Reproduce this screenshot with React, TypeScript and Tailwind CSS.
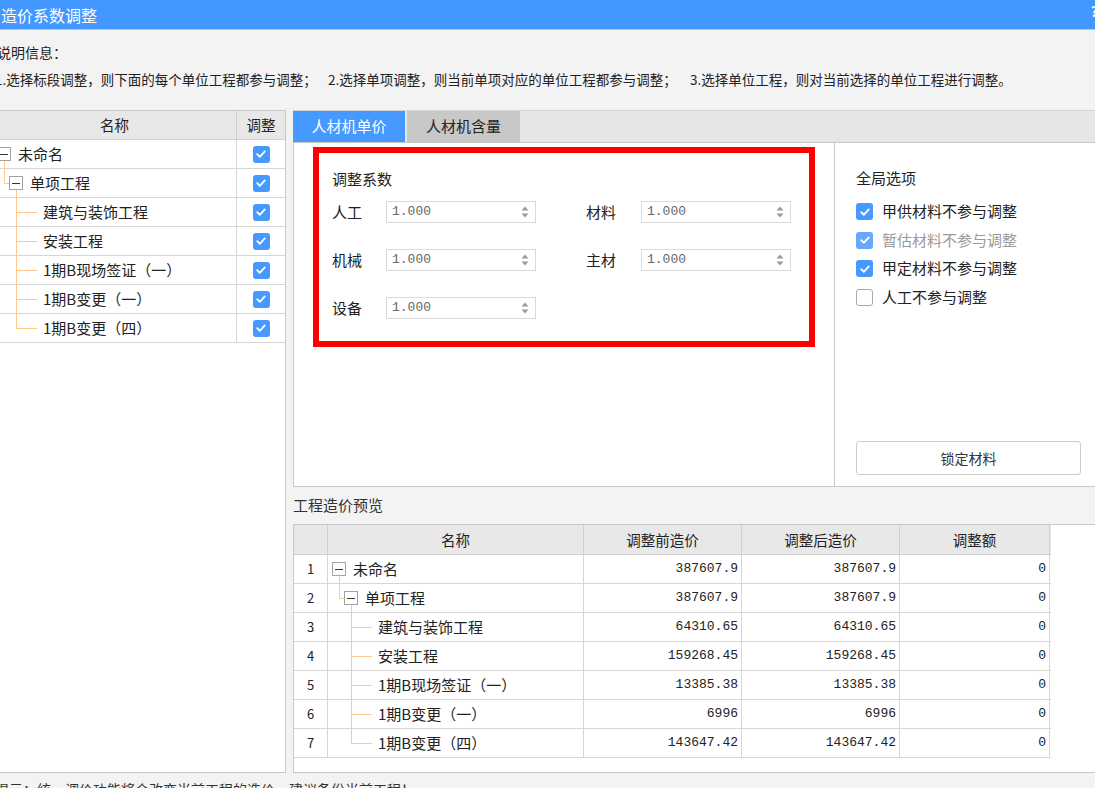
import React from 'react';

const rows = [
  { name: '未命名', before: '387607.9', after: '387607.9' },
  { name: '单项工程', before: '387607.9', after: '387607.9' },
  { name: '建筑与装饰工程', before: '64310.65', after: '64310.65' },
  { name: '安装工程', before: '159268.45', after: '159268.45' },
  { name: '1期B现场签证（一）', before: '13385.38', after: '13385.38' },
  { name: '1期B变更（一）', before: '6996', after: '6996' },
  { name: '1期B变更（四）', before: '143647.42', after: '143647.42' },
];

const line = 'bg-[#ffc98c]';

function MinusBox({ left }: { left: string }) {
  return (
    <span className={`absolute top-[7px] flex h-[14px] w-[14px] items-center justify-center border border-[#a3a3a3] bg-white ${left}`}>
      <span className="h-px w-[8px] bg-[#333]" />
    </span>
  );
}

// tree connectors are drawn inside the name cell
function TreeName({ i, name }: { i: number; name: string }) {
  return (
    <div className="relative h-full">
      {i === 0 && (
        <>
          <span className={`absolute left-[11px] top-[21px] -bottom-px w-px ${line}`} />
          <MinusBox left="left-[4px]" />
          <span className="absolute left-[25px] top-0 flex h-full items-center">{name}</span>
        </>
      )}
      {i === 1 && (
        <>
          <span className={`absolute left-[11px] -top-px h-[15px] w-px ${line}`} />
          <span className={`absolute left-[11px] top-[14px] h-px w-[5px] ${line}`} />
          <span className={`absolute left-[23px] top-[21px] -bottom-px w-px ${line}`} />
          <MinusBox left="left-[16px]" />
          <span className="absolute left-[37px] top-0 flex h-full items-center">{name}</span>
        </>
      )}
      {i > 1 && (
        <>
          <span className={`absolute left-[23px] -top-px w-px ${line} ${i === 6 ? 'h-[15px]' : '-bottom-px'}`} />
          <span className={`absolute left-[23px] top-[14px] h-px w-[21px] ${line}`} />
          <span className="absolute left-[50px] top-0 flex h-full items-center">{name}</span>
        </>
      )}
    </div>
  );
}

function Check({ checked = true, dim = false }: { checked?: boolean; dim?: boolean }) {
  if (!checked) return <span className="block h-[17px] w-[17px] shrink-0 rounded-[3px] border border-[#a9a9a9] bg-white" />;
  return (
    <span className={`flex h-[17px] w-[17px] shrink-0 items-center justify-center rounded-[3px] ${dim ? 'bg-[#66a8fa]' : 'bg-[#4599ff]'}`}>
      <svg width="12" height="12" viewBox="0 0 12 12">
        <path d="M2.2 6.2l2.6 2.6 5-5.4" fill="none" stroke="white" strokeWidth="1.8" strokeLinecap="round" strokeLinejoin="round" />
      </svg>
    </span>
  );
}

function Spin() {
  return (
    <div className="flex h-[22px] w-[150px] items-center justify-between border border-[#dadada] bg-white pl-[5px] pr-[6px]">
      <span className="font-['Liberation_Mono',monospace] text-[13px] text-[#666]">1.000</span>
      <svg width="8" height="14" viewBox="0 0 8 14">
        <path d="M4 1.5L7.5 5.5H0.5Z" fill="#9a9a9a" />
        <path d="M4 12.5L7.5 8.5H0.5Z" fill="#9a9a9a" />
      </svg>
    </div>
  );
}

export default function App() {
  return (
    <div className="h-[788px] w-[1095px] overflow-hidden bg-[#f3f3f3] font-['Noto_Sans_CJK_SC',sans-serif] text-[#222]">
      <div className="w-[1120px]">
        <div className="flex h-[30px] items-center justify-between border-b border-[#9cc6ff] bg-[#4398ff] text-white">
          <span className="pl-[1px] text-[16px] leading-[20px]">造价系数调整</span>
          <span className="pr-[22px] pb-[8px] text-[14px] font-bold leading-[14px]">?</span>
        </div>

        <div className="-ml-[3px] mt-[12px] text-[14px] leading-[20px]">说明信息：</div>
        <div className="-ml-[5px] mt-[7px] flex text-[13.5px] leading-[20px] text-[#222]">
          <span className="w-[333px] shrink-0">1.选择标段调整，则下面的每个单位工程都参与调整；</span>
          <span className="w-[362px] shrink-0">2.选择单项调整，则当前单项对应的单位工程都参与调整；</span>
          <span className="shrink-0">3.选择单位工程，则对当前选择的单位工程进行调整。</span>
        </div>

        <div className="mt-[21px] flex h-[663px] gap-[7px]">
          {/* left tree */}
          <div className="-ml-[8px] w-[294px] shrink-0 border border-[#c8c8c8] bg-white text-[15px]">
            <div className="flex h-[29px] border-b border-[#cfcfcf] bg-[#e8e8e8] text-[14.5px]">
              <div className="flex flex-1 items-center justify-center border-r border-[#cfcfcf]">名称</div>
              <div className="flex w-[48px] items-center justify-center">调整</div>
            </div>
            {rows.map((r, i) => (
              <div key={r.name} className="flex h-[29px] border-b border-[#d6d6d6]">
                <div className="flex-1 border-r border-[#d6d6d6]">
                  <TreeName i={i} name={r.name} />
                </div>
                <div className="flex w-[48px] items-center justify-center">
                  <Check />
                </div>
              </div>
            ))}
          </div>

          {/* right column */}
          <div className="flex flex-1 flex-col">
            <div className="flex h-[32px] gap-[2px] border-t border-[#d4d4d4] bg-[#e6e6e6] text-[15px]">
              <div className="flex w-[112px] items-center justify-center bg-[#4599ff] text-white">人材机单价</div>
              <div className="flex w-[113px] items-center justify-center bg-[#c8c8c8] text-[#222]">人材机含量</div>
            </div>
            <div className="flex h-[345px] border border-[#c8c8c8] bg-white text-[15px]">
              <div className="w-[541px] shrink-0 border-r border-[#c8c8c8] pl-[19px] pt-[4px]">
                <div className="h-[200px] w-[502px] border-[6px] border-[#ff0000] pl-[13px] pt-[16px]">
                  <div className="leading-[20px]">调整系数</div>
                  <div className="mt-[12px] flex flex-col gap-[26px]">
                    <div className="flex h-[22px] items-center">
                      <span className="w-[54px]">人工</span>
                      <Spin />
                      <span className="ml-[50px] w-[55px]">材料</span>
                      <Spin />
                    </div>
                    <div className="flex h-[22px] items-center">
                      <span className="w-[54px]">机械</span>
                      <Spin />
                      <span className="ml-[50px] w-[55px]">主材</span>
                      <Spin />
                    </div>
                    <div className="flex h-[22px] items-center">
                      <span className="w-[54px]">设备</span>
                      <Spin />
                    </div>
                  </div>
                </div>
              </div>
              <div className="flex w-[260px] flex-col pl-[21px] pt-[24px]">
                <div className="leading-[22px]">全局选项</div>
                <div className="mt-[14px] flex flex-col gap-[11.5px]">
                  <label className="flex h-[17px] items-center gap-[9px]"><Check />甲供材料不参与调整</label>
                  <label className="flex h-[17px] items-center gap-[9px] text-[#9a9a9a]"><Check dim />暂估材料不参与调整</label>
                  <label className="flex h-[17px] items-center gap-[9px]"><Check />甲定材料不参与调整</label>
                  <label className="flex h-[17px] items-center gap-[9px]"><Check checked={false} />人工不参与调整</label>
                </div>
                <button className="mb-[11px] mt-auto flex h-[34px] w-[225px] items-center justify-center rounded-[3px] border border-[#cdcdcd] bg-white text-[14px] text-[#333]">
                  锁定材料
                </button>
              </div>
            </div>

            <div className="flex h-[37px] items-center text-[15px] text-[#333]">工程造价预览</div>

            <div className="h-[249px] border border-[#c8c8c8] bg-white">
              <div className="w-[757px] text-[15px]">
                <div className="flex h-[30px] border-b border-[#cfcfcf] bg-[#e8e8e8] text-[14.5px]">
                  <div className="w-[34px] border-r border-[#cfcfcf]" />
                  <div className="flex w-[256px] items-center justify-center border-r border-[#cfcfcf]">名称</div>
                  <div className="flex w-[158px] items-center justify-center border-r border-[#cfcfcf]">调整前造价</div>
                  <div className="flex w-[158px] items-center justify-center border-r border-[#cfcfcf]">调整后造价</div>
                  <div className="flex w-[150px] items-center justify-center border-r border-[#cfcfcf]">调整额</div>
                </div>
                {rows.map((r, i) => (
                  <div key={r.name} className="flex h-[29px] border-b border-[#d6d6d6]">
                    <div className="flex w-[34px] items-center justify-center border-r border-[#d6d6d6] text-[13px]">{i + 1}</div>
                    <div className="w-[256px] border-r border-[#d6d6d6]">
                      <TreeName i={i} name={r.name} />
                    </div>
                    <div className="flex w-[158px] items-center justify-end border-r border-[#d6d6d6] pr-[3px] font-['Liberation_Mono',monospace] text-[13px] text-[#222]">{r.before}</div>
                    <div className="flex w-[158px] items-center justify-end border-r border-[#d6d6d6] pr-[3px] font-['Liberation_Mono',monospace] text-[13px] text-[#222]">{r.after}</div>
                    <div className="flex w-[150px] items-center justify-end border-r border-[#d6d6d6] pr-[3px] font-['Liberation_Mono',monospace] text-[13px] text-[#222]">0</div>
                  </div>
                ))}
              </div>
            </div>
          </div>
        </div>

        <div className="-ml-[5px] mt-[6px] text-[14px] leading-[20px] text-[#333]">
          提示：统一调价功能将会改变当前工程的造价，建议备份当前工程！
        </div>
      </div>
    </div>
  );
}
